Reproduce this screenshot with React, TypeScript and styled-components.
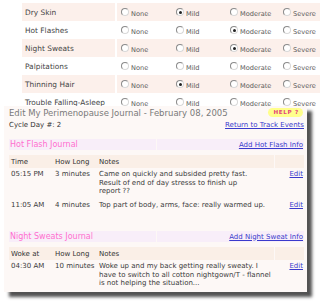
import React from "react";
import styled, { createGlobalStyle } from "styled-components";

const GlobalStyle = createGlobalStyle`
  html, body { margin: 0; padding: 0; background: #ffffff; }
  body { font-family: "DejaVu Sans", Verdana, sans-serif; }
`;

const Page = styled.div`
  position: relative;
  width: 320px;
  height: 301px;
  overflow: hidden;
  background: #ffffff;
`;

const SymptomTable = styled.div`
  display: flex;
  flex-direction: column;
  padding-top: 3px;
  padding-left: 22px;
`;

const SymptomRow = styled.div<{ $shaded: boolean }>`
  display: grid;
  grid-template-columns: 93px 1fr;
  column-gap: 2px;
  height: 18px;
  & > * { background: ${(p) => (p.$shaded ? "#fcf0eb" : "#ffffff")}; }
`;

const SymptomLabel = styled.div`
  display: flex;
  align-items: center;
  padding-left: 3px;
  font-size: 7.4px;
  color: #444;
`;

const Options = styled.div`
  display: grid;
  grid-template-columns: 55px 54px 53px auto;
  align-items: center;
  padding-left: 4px;
`;

const Option = styled.div`
  display: flex;
  align-items: center;
  gap: 2px;
  font-size: 6.6px;
  color: #5a5a5a;
  white-space: nowrap;
`;

const OptionText = styled.span`
  padding-top: 3px;
`;

const Radio = styled.span<{ $checked: boolean }>`
  position: relative;
  display: inline-block;
  box-sizing: border-box;
  width: 8px;
  height: 8px;
  border-radius: 50%;
  border: 1px solid #8a8a8a;
  border-right-color: #d8d8d8;
  border-bottom-color: #d8d8d8;
  background: #ffffff;
  &::after {
    content: "";
    display: ${(p) => (p.$checked ? "block" : "none")};
    position: absolute;
    left: 1.5px;
    top: 1.5px;
    width: 3px;
    height: 3px;
    border-radius: 50%;
    background: #222;
  }
`;

const Card = styled.div`
  position: absolute;
  left: 4px;
  top: 106px;
  width: 303px;
  height: 186px;
  box-sizing: border-box;
  padding: 3px 3px 0 5px;
  background: #fdf8f6;
  box-shadow: 5px 5px 3px rgba(40, 40, 40, 0.8);
`;

const Title = styled.div`
  font-size: 8.5px;
  line-height: 9px;
  color: #7a7a7a;
  white-space: nowrap;
`;

const HelpBadge = styled.div`
  position: absolute;
  right: 4px;
  top: 2px;
  padding: 1px 4px 1px 5px;
  border-radius: 5px;
  background: #ffff8c;
  color: #e2457a;
  font-size: 5.6px;
  font-weight: bold;
  text-transform: uppercase;
  letter-spacing: 0.7px;
  line-height: 7px;
`;

const InfoRow = styled.div`
  display: flex;
  justify-content: space-between;
  align-items: center;
  margin-top: 2px;
  height: 9px;
  font-size: 7px;
  color: #333;
`;

const Link = styled.a`
  color: #3a3acc;
  text-decoration: underline;
  font-size: 7px;
  cursor: pointer;
`;

const Band = styled.div<{ $top: number }>`
  display: grid;
  grid-template-columns: 147px 1fr;
  column-gap: 1px;
  margin-top: ${(p) => p.$top}px;
  height: 11px;
  & > * { background: #f8eef9; display: flex; align-items: center; }
`;

const BandTitle = styled.div`
  padding-left: 1px;
  color: #ff6fcf;
  font-size: 8px;
`;

const BandLink = styled.div`
  justify-content: flex-end;
  padding-right: 1px;
`;

const JournalGrid = styled.div`
  display: grid;
  grid-template-columns: 44px 44px 177px 1fr;
  margin-top: 5px;
`;

const HeadCell = styled.div<{ $sep?: boolean }>`
  height: 13px;
  display: flex;
  align-items: center;
  padding-left: ${(p) => (p.$sep ? "0" : "2px")};
  background: #faefe7;
  font-size: 7px;
  color: #333;
  border-left: ${(p) => (p.$sep ? "1px solid #fdf8f6" : "none")};
`;

const Cell = styled.div<{ $pb: number }>`
  padding: 2px 0 ${(p) => p.$pb}px 2px;
  font-size: 7px;
  line-height: 8.5px;
  color: #3a3a3a;
`;

const EditCell = styled.div<{ $pb: number }>`
  padding: 2px 1px ${(p) => p.$pb}px 0;
  display: flex;
  justify-content: flex-end;
  align-items: flex-start;
  line-height: 8.5px;
`;

type Level = "None" | "Mild" | "Moderate" | "Severe";
const levels: Level[] = ["None", "Mild", "Moderate", "Severe"];

const symptoms: { name: string; value: Level | null }[] = [
  { name: "Dry Skin", value: "Mild" },
  { name: "Hot Flashes", value: "Moderate" },
  { name: "Night Sweats", value: "Moderate" },
  { name: "Palpitations", value: null },
  { name: "Thinning Hair", value: "Mild" },
  { name: "Trouble Falling-Asleep", value: null },
];

type Entry = { time: string; dur: string; notes: string[]; pb: number };

const hotFlashes: Entry[] = [
  { time: "05:15 PM", dur: "3 minutes", notes: ["Came on quickly and subsided pretty fast.", "Result of end of day stresss to finish up", "report ??"], pb: 3 },
  { time: "11:05 AM", dur: "4 minutes", notes: ["Top part of body, arms, face: really warmed up."], pb: 0 },
];

const nightSweats: Entry[] = [
  { time: "04:30 AM", dur: "10 minutes", notes: ["Woke up and my back getting really sweaty. I", "have to switch to all cotton nightgown/T - flannel", "is not helping the situation..."], pb: 0 },
];

const JournalTable: React.FC<{ first: string; entries: Entry[] }> = ({ first, entries }) => (
  <JournalGrid>
    <HeadCell>{first}</HeadCell>
    <HeadCell>How Long</HeadCell>
    <HeadCell>Notes</HeadCell>
    <HeadCell $sep />
    {entries.map((e) => (
      <React.Fragment key={e.time}>
        <Cell $pb={e.pb}>{e.time}</Cell>
        <Cell $pb={e.pb}>{e.dur}</Cell>
        <Cell $pb={e.pb}>
          {e.notes.map((n) => (
            <div key={n}>{n}</div>
          ))}
        </Cell>
        <EditCell $pb={e.pb}>
          <Link>Edit</Link>
        </EditCell>
      </React.Fragment>
    ))}
  </JournalGrid>
);

export default function App() {
  return (
    <Page>
      <GlobalStyle />
      <SymptomTable>
        {symptoms.map((s, i) => (
          <SymptomRow key={s.name} $shaded={i % 2 === 0}>
            <SymptomLabel>{s.name}</SymptomLabel>
            <Options>
              {levels.map((l) => (
                <Option key={l}>
                  <Radio $checked={s.value === l} />
                  <OptionText>{l}</OptionText>
                </Option>
              ))}
            </Options>
          </SymptomRow>
        ))}
      </SymptomTable>
      <Card>
        <Title>Edit My Perimenopause Journal - February 08, 2005</Title>
        <HelpBadge>Help ?</HelpBadge>
        <InfoRow>
          <span>Cycle Day #: 2</span>
          <Link>Return to Track Events</Link>
        </InfoRow>
        <Band $top={10}>
          <BandTitle>Hot Flash Journal</BandTitle>
          <BandLink>
            <Link>Add Hot Flash Info</Link>
          </BandLink>
        </Band>
        <JournalTable first="Time" entries={hotFlashes} />
        <Band $top={22}>
          <BandTitle>Night Sweats Journal</BandTitle>
          <BandLink>
            <Link>Add Night Sweat Info</Link>
          </BandLink>
        </Band>
        <JournalTable first="Woke at" entries={nightSweats} />
      </Card>
    </Page>
  );
}
